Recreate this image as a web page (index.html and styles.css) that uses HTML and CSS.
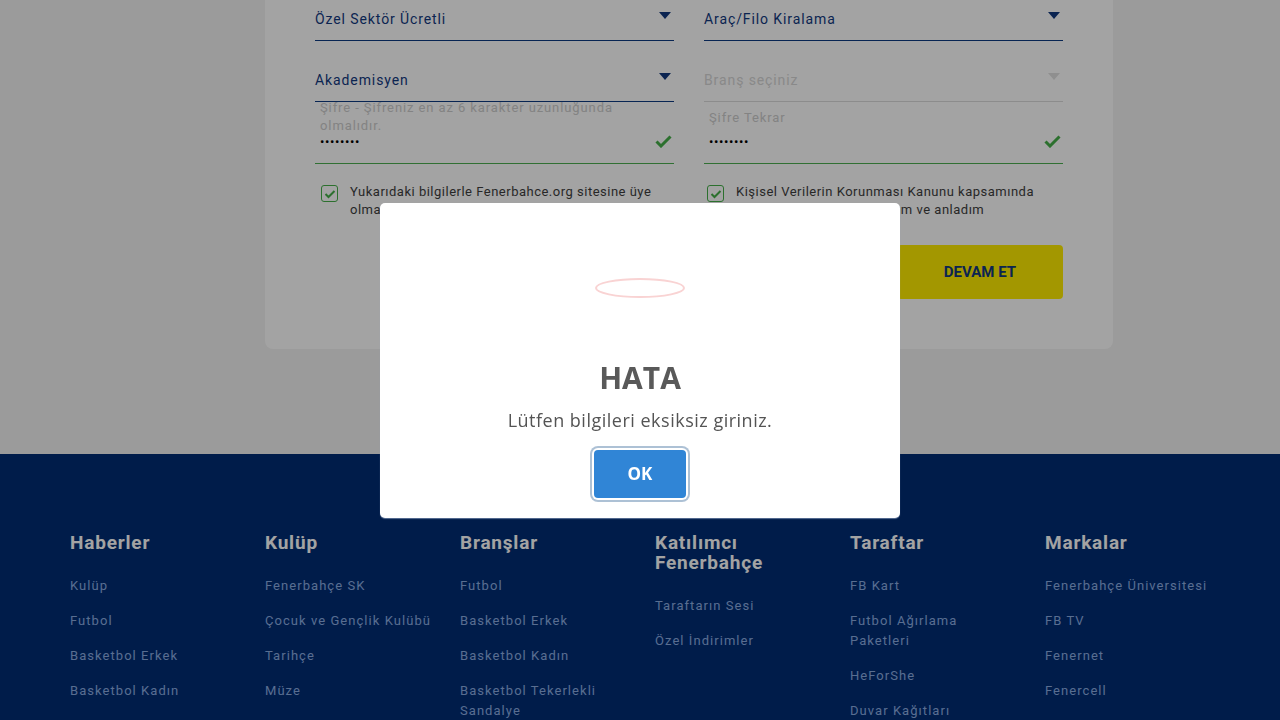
FILE: index.html
```html
<!DOCTYPE html>
<html lang="tr">
<head>
<meta charset="utf-8">
<title>Üyelik</title>
<link rel="stylesheet" href="styles.css">
</head>
<body>
<main class="page">
  <section class="card">
    <div class="form-grid">
      <div class="field select">
        <span class="value">Özel Sektör Ücretli</span>
        <svg class="caret" width="12" height="8" viewBox="0 0 12 8"><path d="M0 0h12L6 7z"/></svg>
      </div>
      <div class="field select">
        <span class="value">Araç/Filo Kiralama</span>
        <svg class="caret" width="12" height="8" viewBox="0 0 12 8"><path d="M0 0h12L6 7z"/></svg>
      </div>
      <div class="field select">
        <span class="value">Akademisyen</span>
        <svg class="caret" width="12" height="8" viewBox="0 0 12 8"><path d="M0 0h12L6 7z"/></svg>
      </div>
      <div class="field select disabled">
        <span class="value">Branş seçiniz</span>
        <svg class="caret" width="12" height="8" viewBox="0 0 12 8"><path d="M0 0h12L6 7z"/></svg>
      </div>
      <div class="field password">
        <label class="float-label">Şifre - Şifreniz en az 6 karakter uzunluğunda olmalıdır.</label>
        <div class="pw-row">
          <span class="dots">••••••••</span>
          <svg class="ok" width="17" height="13" viewBox="0 0 17 13"><path d="M1.5 6.5l4.5 4.5L15.5 1.5" fill="none" stroke-width="3"/></svg>
        </div>
      </div>
      <div class="field password">
        <label class="float-label single">Şifre Tekrar</label>
        <div class="pw-row">
          <span class="dots">••••••••</span>
          <svg class="ok" width="17" height="13" viewBox="0 0 17 13"><path d="M1.5 6.5l4.5 4.5L15.5 1.5" fill="none" stroke-width="3"/></svg>
        </div>
      </div>
      <div class="check">
        <span class="box"><svg width="12" height="10" viewBox="0 0 12 10"><path d="M1.5 5l3 3 6-6" fill="none" stroke-width="2"/></svg></span>
        <span class="check-text">Yukarıdaki bilgilerle Fenerbahce.org sitesine üye olmayı kabul ediyorum</span>
      </div>
      <div class="check check-right">
        <span class="box"><svg width="12" height="10" viewBox="0 0 12 10"><path d="M1.5 5l3 3 6-6" fill="none" stroke-width="2"/></svg></span>
        <span class="check-text">Kişisel Verilerin Korunması Kanunu kapsamında Aydınlatma Metni'ni okudum ve anladım</span>
      </div>
    </div>
    <div class="actions">
      <button class="btn-primary">DEVAM ET</button>
    </div>
  </section>

  <footer class="footer">
    <div class="footer-cols">
      <div class="col">
        <h3>Haberler</h3>
        <a>Kulüp</a><a>Futbol</a><a>Basketbol Erkek</a><a>Basketbol Kadın</a>
      </div>
      <div class="col">
        <h3>Kulüp</h3>
        <a>Fenerbahçe SK</a><a>Çocuk ve Gençlik Kulübü</a><a>Tarihçe</a><a>Müze</a>
      </div>
      <div class="col">
        <h3>Branşlar</h3>
        <a>Futbol</a><a>Basketbol Erkek</a><a>Basketbol Kadın</a><a>Basketbol Tekerlekli Sandalye</a>
      </div>
      <div class="col">
        <h3>Katılımcı Fenerbahçe</h3>
        <a>Taraftarın Sesi</a><a>Özel İndirimler</a>
      </div>
      <div class="col">
        <h3>Taraftar</h3>
        <a>FB Kart</a><a>Futbol Ağırlama Paketleri</a><a>HeForShe</a><a>Duvar Kağıtları</a>
      </div>
      <div class="col">
        <h3>Markalar</h3>
        <a>Fenerbahçe Üniversitesi</a><a>FB TV</a><a>Fenernet</a><a>Fenercell</a>
      </div>
    </div>
  </footer>
</main>

<div class="overlay"></div>
<div class="modal-wrap">
  <div class="modal" role="dialog">
    <div class="icon">
      <svg width="92" height="22" viewBox="0 0 92 22"><ellipse cx="46" cy="11" rx="44" ry="9" fill="none" stroke="#f9d3d3" stroke-width="2"/></svg>
    </div>
    <h2 class="modal-title">HATA</h2>
    <p class="modal-text">Lütfen bilgileri eksiksiz giriniz.</p>
    <button class="btn-ok">OK</button>
  </div>
</div>
</body>
</html>
```

FILE: styles.css
```css
* { box-sizing: border-box; }
html, body { margin: 0; padding: 0; }
body {
  background: #f3f3f3;
  font-family: Roboto, "Noto Sans", Arial, sans-serif;
  overflow: hidden;
}
.page { display: flex; flex-direction: column; align-items: flex-start; }

.card {
  width: 848px;
  margin-left: 265px;
  background: #fff;
  border-radius: 0 0 8px 8px;
  padding: 0 50px 50px;
}
.form-grid {
  display: grid;
  grid-template-columns: 359px 359px;
  column-gap: 30px;
}
.field { position: relative; }
.select {
  height: 41px;
  border-bottom: 1px solid #0e3a82;
  display: flex;
  justify-content: space-between;
  align-items: flex-start;
  margin-bottom: 20px;
}
.select:nth-child(3), .select:nth-child(4) { margin-bottom: 0; }
.value {
  font-size: 14px;
  line-height: 20px;
  padding-top: 9px;
  color: #12397f;
  letter-spacing: 0.9px;
}
.caret { fill: #12397f; margin-top: 12px; margin-right: 3px; }
.disabled { border-bottom-color: #dcdcdc; }
.disabled .value { color: #d6d6d6; }
.disabled .caret { fill: #e0e0e0; }

.password {
  height: 62px;
  border-bottom: 1px solid #4caf50;
  display: flex;
  flex-direction: column;
  justify-content: flex-end;
  padding: 0 0 12px 5px;
}
.float-label {
  flex: none;
  font-size: 13px;
  line-height: 18px;
  color: #cdcdcd;
  letter-spacing: 0.9px;
  max-width: 320px;
  margin-bottom: -4px;
}
.float-label.single { margin-bottom: 4px; }
.pw-row { flex: none; display: flex; justify-content: space-between; align-items: center; height: 20px; }
.dots { font-size: 13px; letter-spacing: 0.6px; color: #000; }
.ok { stroke: #45b049; margin-right: 2px; }

.check {
  display: flex;
  gap: 12px;
  padding: 19px 0 0 6px;
}
.check-right { padding-left: 3px; gap: 12px; }
.box {
  flex: none;
  width: 17px; height: 17px;
  border: 1.5px solid #45b049;
  border-radius: 3px;
  display: flex; align-items: center; justify-content: center;
  margin-top: 2px;
}
.box svg { stroke: #45b049; }
.check-text {
  font-size: 13px;
  line-height: 18px;
  color: #3e3e3e;
  letter-spacing: 0.5px;
  width: 320px;
}

.actions { display: flex; justify-content: flex-end; margin-top: 26px; }
.btn-primary {
  width: 166px; height: 54px;
  border: 0; border-radius: 4px;
  background: #ffed00;
  color: #12397f;
  font-family: Roboto, Arial, sans-serif;
  font-weight: 700;
  font-size: 15px;
}

.footer {
  align-self: stretch;
  margin-top: 105px;
  background: #002d75;
  padding: 79px 0 0 70px;
  height: 300px;
}
.footer-cols { display: grid; grid-template-columns: repeat(6, 195px); }
.col { display: flex; flex-direction: column; align-items: flex-start; max-width: 168px; }
.col h3 {
  margin: 0 0 23px;
  font-size: 19px;
  line-height: 20px;
  font-weight: 700;
  color: #fff;
  letter-spacing: 0.8px;
}
.col a {
  font-size: 13px;
  line-height: 20px;
  color: #8cace2;
  letter-spacing: 1.05px;
  margin-bottom: 15px;
}

.overlay {
  position: fixed; inset: 0;
  background: rgba(0,0,0,0.36);
}
.modal-wrap {
  position: fixed; inset: 0;
  display: flex; align-items: center; justify-content: center;
}
.modal {
  width: 520px; height: 315px;
  background: #fff;
  border-radius: 5px;
  padding: 45px 20px 20px;
  display: flex; flex-direction: column; align-items: center;
  box-shadow: 0 1px 1px rgba(150,170,200,0.6);
}
.icon { height: 80px; display: flex; align-items: center; justify-content: center; }
.modal-title {
  margin: 32px 0 0;
  font-family: "Open Sans", Arial, sans-serif;
  font-size: 30px; line-height: 36px; font-weight: 700;
  color: #595959;
}
.modal-text {
  margin: 12px 0 0;
  font-family: "Open Sans", Arial, sans-serif;
  font-size: 18px; line-height: 24px;
  letter-spacing: 0.5px;
  color: #545454;
}
.btn-ok {
  margin-top: 18px;
  width: 92px; height: 48px;
  border: 0; border-radius: 4px;
  background: #3085d6;
  color: #fff;
  font-family: "Open Sans", Arial, sans-serif;
  font-weight: 700; font-size: 17px;
  box-shadow: 0 0 0 2px #fff, 0 0 0 4px rgba(50,100,150,0.4);
}
```
